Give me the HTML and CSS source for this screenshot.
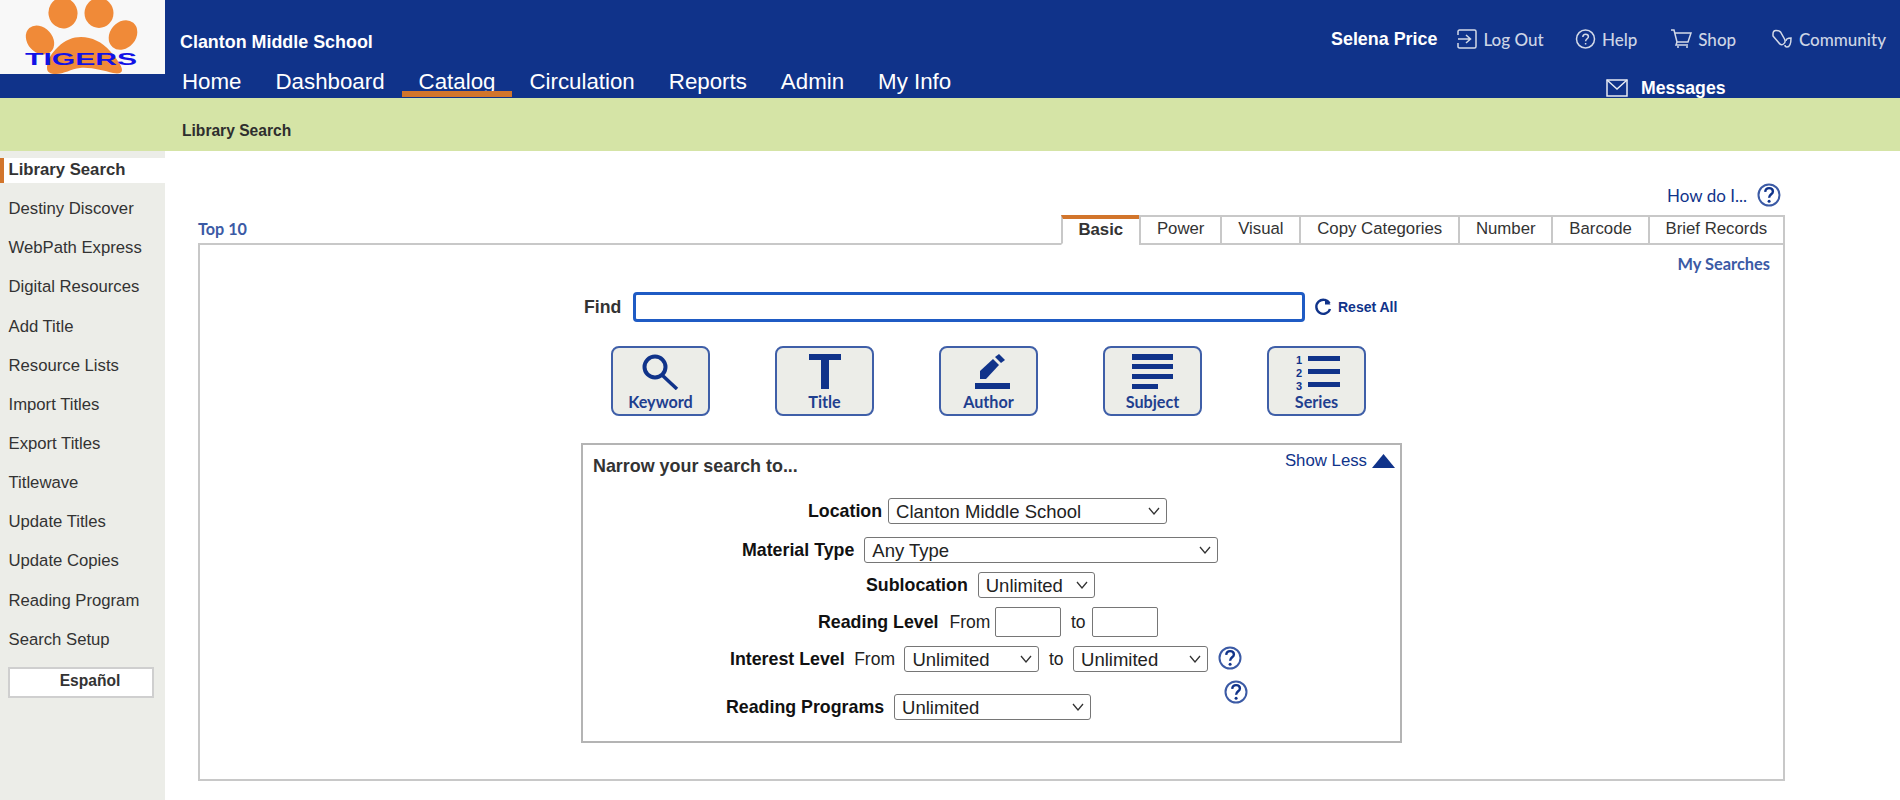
FILE: index.html
```html
<!DOCTYPE html>
<html lang="en">
<head>
<meta charset="utf-8">
<title>Library Search</title>
<link rel="stylesheet" href="styles.css">
</head>
<body>
<svg class="sprite" aria-hidden="true">
  <symbol id="help" viewBox="0 0 24 24">
    <circle cx="12" cy="12" r="10.500" fill="none" stroke="#3b5aa5" stroke-width="2"/>
    <path d="M8.200 8.800c.2-2.400 1.900-3.700 3.900-3.700 2.200 0 3.800 1.400 3.800 3.300 0 2.800-3.700 3-3.800 6.300" fill="none" stroke="#10338a" stroke-width="2.400"/>
    <circle cx="12.100" cy="18.300" r="1.500" fill="#10338a"/>
  </symbol>
</svg>

<header class="header">
  <div class="logo">
    <svg width="165" height="74" viewBox="0 0 165 74">
      <rect width="165" height="74" fill="#f8f8f8"/>
      <g fill="#f08a38">
        <ellipse cx="63" cy="13" rx="14.500" ry="15.500" transform="rotate(-12 63 13)"/>
        <ellipse cx="99" cy="13" rx="14.500" ry="15"/>
        <ellipse cx="40" cy="40" rx="16" ry="12.500" transform="rotate(48 40 40)"/>
        <ellipse cx="123" cy="35" rx="16" ry="13" transform="rotate(-50 123 35)"/>
        <path d="M47 68c0-8 4-14 11-21 7-7 15-10 23-10 11 0 21 5 29 14 7 8 12 15 12 19 0 3-3 4-9 3-9-2-21-6-33-5-9 1-16 6-24 6-6 0-9-2-9-6z"/>
      </g>
      <text class="logo-text" x="25" y="65" textLength="112" lengthAdjust="spacingAndGlyphs">TIGERS</text>
    </svg>
  </div>
  <div class="head-main">
    <div class="school">Clanton Middle School</div>
    <nav class="topnav">
      <a class="topnav-item">Home</a>
      <a class="topnav-item">Dashboard</a>
      <a class="topnav-item is-current">Catalog</a>
      <a class="topnav-item">Circulation</a>
      <a class="topnav-item">Reports</a>
      <a class="topnav-item">Admin</a>
      <a class="topnav-item">My Info</a>
    </nav>
  </div>
  <div class="head-right">
    <div class="userbar">
      <span class="user-name">Selena Price</span>
      <a class="user-link link-first">
        <svg width="20" height="20" viewBox="0 0 20 20" fill="none" stroke="#d3dae8" stroke-width="1.500"><path d="M1 6V2.500C1 1.600 1.600 1 2.500 1h15c.9 0 1.500.6 1.500 1.500v15c0 .9-.6 1.500-1.500 1.500h-15C1.600 19 1 18.400 1 17.500V14"/><path d="M1 10h12M9 6l4.500 4L9 14"/></svg>
        Log Out
      </a>
      <a class="user-link link-help">
        <svg width="21" height="20" viewBox="0 0 21 20" fill="none" stroke="#d3dae8" stroke-width="1.500"><circle cx="10.500" cy="10" r="9"/><path d="M7.800 8c.1-1.800 1.300-2.800 2.800-2.800 1.600 0 2.800 1 2.800 2.500 0 2-2.700 2.200-2.800 4.500"/><path d="M10.600 14v1.500"/></svg>
        Help
      </a>
      <a class="user-link">
        <svg width="22" height="20" viewBox="0 0 22 20" fill="none" stroke="#d3dae8" stroke-width="1.500"><path d="M1 1h3l3 12h11l3-9H5"/><path d="M7 13l-1 3h12"/><path d="M8 17v2M17 17v2"/></svg>
        Shop
      </a>
      <a class="user-link link-community">
        <svg width="22" height="20" viewBox="0 0 22 20" fill="none" stroke="#d3dae8" stroke-width="1.500"><path d="M2 5c0-2 1-3.500 3-3.500 2 0 3.500 0 4.500 1.500l4 7c1 2 .5 4-1 5s-3.500.5-4.500-1L2 7z"/><path d="M15 12c0-2 2-3 5-3 0 4-.5 9-4 9-1.500 0-2-1-2-2"/></svg>
        Community
      </a>
    </div>
    <div class="messages">
      <svg width="22" height="18" viewBox="0 0 22 18" fill="none" stroke="#e6eaf3" stroke-width="1.500"><path d="M1 1h20v16H1z"/><path d="M1 1l10 9 10-9"/></svg>
      <span>Messages</span>
    </div>
  </div>
</header>

<div class="subbar">Library Search</div>

<div class="page">
  <aside class="sidebar">
    <a class="side-item is-active">Library Search</a>
    <a class="side-item">Destiny Discover</a>
    <a class="side-item">WebPath Express</a>
    <a class="side-item">Digital Resources</a>
    <a class="side-item">Add Title</a>
    <a class="side-item">Resource Lists</a>
    <a class="side-item">Import Titles</a>
    <a class="side-item">Export Titles</a>
    <a class="side-item">Titlewave</a>
    <a class="side-item">Update Titles</a>
    <a class="side-item">Update Copies</a>
    <a class="side-item">Reading Program</a>
    <a class="side-item">Search Setup</a>
    <button class="lang-btn" type="button">Español</button>
  </aside>

  <main class="content">
    <div class="howto">
      <a class="howto-link">How do I...</a>
      <svg class="help-icon" viewBox="0 0 24 24"><use href="#help"/></svg>
    </div>
    <div class="tabrow">
      <a class="top10">Top 10</a>
      <div class="tabs">
        <a class="tab is-active">Basic</a>
        <a class="tab">Power</a>
        <a class="tab">Visual</a>
        <a class="tab">Copy Categories</a>
        <a class="tab">Number</a>
        <a class="tab">Barcode</a>
        <a class="tab">Brief Records</a>
      </div>
    </div>
    <section class="panel">
      <div class="mysearch"><a>My Searches</a></div>
      <div class="findrow">
        <label class="find-label" for="find">Find</label>
        <input class="find-input" id="find" type="text">
        <svg class="reset-icon" width="18" height="20" viewBox="0 0 18 20" fill="none" stroke="#10338a" stroke-width="2.400"><path d="M15.500 6.500A7 7 0 1 0 16 12"/><path d="M11 1.500v6h5.500z" fill="#10338a" stroke="none"/></svg>
        <a class="reset-link">Reset All</a>
      </div>
      <div class="search-types">
        <button class="stype" type="button">
          <svg width="48" height="36" viewBox="0 0 48 36" fill="none" stroke="#10338a" stroke-width="4"><circle cx="18" cy="13" r="10.500"/><path d="M25 21l15 14" stroke-width="3.500"/></svg>
          <span>Keyword</span>
        </button>
        <button class="stype" type="button">
          <svg width="48" height="36" viewBox="0 0 48 36" fill="#10338a"><path d="M8 0h32v6H28v29h-8V6H8z"/></svg>
          <span>Title</span>
        </button>
        <button class="stype" type="button">
          <svg width="48" height="36" viewBox="0 0 48 36" fill="#10338a"><path d="M10 29h35v6H10z"/><path d="M15 25v-8L28 5l6 6-13 14z"/><path d="M30 3l4-3 6 6-4 3z"/></svg>
          <span>Author</span>
        </button>
        <button class="stype" type="button">
          <svg width="48" height="36" viewBox="0 0 48 36" fill="#10338a"><path d="M3 0h41v6H3zM3 10h41v5H3zM3 20h41v5H3zM3 30h26v5H3z"/></svg>
          <span>Subject</span>
        </button>
        <button class="stype" type="button">
          <svg width="48" height="36" viewBox="0 0 48 36"><g fill="#10338a"><path d="M15 2h32v5H15zM15 15h32v5H15zM15 28h32v5H15z"/></g><g class="series-num"><text x="3" y="10">1</text><text x="3" y="23">2</text><text x="3" y="36">3</text></g></svg>
          <span>Series</span>
        </button>
      </div>

      <section class="narrow">
        <div class="narrow-head">
          <h2 class="narrow-title">Narrow your search to...</h2>
          <a class="showless">Show Less <svg width="23" height="14" viewBox="0 0 23 14"><path d="M11.500 0L23 14H0z" fill="#10338a"/></svg></a>
        </div>
        <div class="frow frow-location">
          <label class="flabel">Location</label>
          <select class="fselect w-location"><option>Clanton Middle School</option></select>
        </div>
        <div class="frow frow-material">
          <label class="flabel">Material Type</label>
          <select class="fselect w-material"><option>Any Type</option></select>
        </div>
        <div class="frow frow-sub">
          <label class="flabel">Sublocation</label>
          <select class="fselect w-sub"><option>Unlimited</option></select>
        </div>
        <div class="frow frow-reading">
          <label class="flabel">Reading Level</label>
          <span class="ftext from-reading">From</span>
          <input class="fnum" type="text">
          <span class="ftext">to</span>
          <input class="fnum fnum-to" type="text">
        </div>
        <div class="frow frow-interest">
          <label class="flabel">Interest Level</label>
          <span class="ftext">From</span>
          <select class="fselect w-interest"><option>Unlimited</option></select>
          <span class="ftext">to</span>
          <select class="fselect w-interest"><option>Unlimited</option></select>
          <svg class="help-icon help-interest" viewBox="0 0 24 24"><use href="#help"/></svg>
        </div>
        <div class="frow frow-programs">
          <label class="flabel">Reading Programs</label>
          <select class="fselect w-programs"><option>Unlimited</option></select>
          <svg class="help-icon help-programs" viewBox="0 0 24 24"><use href="#help"/></svg>
        </div>
      </section>
    </section>
  </main>
</div>
</body>
</html>
```
FILE: styles.css
```css
* { box-sizing: border-box; }
html, body { margin: 0; padding: 0; height: 800px; overflow: hidden; background: #fff; }
body { font-family: "Liberation Sans", Arial, sans-serif; color: #333; font-size: 16.8px; }
a { display: inline-block; }
.sprite { display: none; }

.header { display: flex; height: 98px; background: #10338a; color: #fff; }
.logo { width: 165px; height: 74px; flex: none; }
.logo svg { display: block; }
.logo-text { font: 700 16px "Liberation Sans", sans-serif; fill: #1212e6; }

.head-main { flex: 1; }
.school { padding: 31px 0 0 15px; height: 66px; font-size: 17.9px; line-height: 22px; font-weight: 700; }
.topnav { display: flex; }
.topnav-item { position: relative; padding: 0 17px; height: 32px; line-height: 32px; font-size: 22.3px; }
.is-current::after { content: ""; position: absolute; left: 0; right: 0; top: 25px; height: 6px; background: #d2752b; }

.head-right { width: 569px; flex: none; padding-top: 28px; }
.userbar { display: flex; align-items: center; height: 22px; }
.user-name { font-size: 17.9px; font-weight: 700; }
.user-link { display: flex; align-items: center; gap: 6px; margin-left: 33px; font-family: Lato, sans-serif; font-size: 17px; font-weight: 500; color: #cdd5e5; }
.link-first { margin-left: 20px; }
.link-help { margin-left: 31.3px; }
.link-community { margin-left: 34.8px; }
.messages { display: flex; align-items: center; gap: 13px; margin: 29px 0 0 275px; height: 18px; font-size: 17.7px; font-weight: 700; }
.messages svg { display: block; }

.subbar { height: 53px; background: #d5e4a6; padding-left: 182px; line-height: 65px; font-size: 15.6px; font-weight: 700; color: #2e2e2e; }

.page { display: flex; height: 649px; }
.sidebar { width: 165px; flex: none; background: #ecede8; padding-top: 7px; }
.side-item { display: block; height: 25px; line-height: 23.4px; margin-bottom: 14.15px; padding-left: 8.5px; font-size: 16.7px; color: #333; }
.side-item.is-active { background: #fff; border-left: 4px solid #d2752b; padding-left: 4.5px; font-weight: 700; }
.lang-btn { display: block; width: 146px; height: 31px; margin: 0 0 0 8px; padding: 0 0 3px 18px; background: #fff; border: 2px solid #cfcfcf; font: 700 15.6px "Liberation Sans", sans-serif; color: #333; }

.content { width: 1620px; padding: 29px 0 0 33px; }
.howto { display: flex; align-items: center; justify-content: flex-end; height: 30px; width: 1583px; }
.howto-link { font-family: Lato, sans-serif; font-size: 17px; color: #10338a; margin-right: 10px; }
.help-icon { width: 24px; height: 24px; display: block; flex: none; }

.tabrow { display: flex; justify-content: space-between; align-items: flex-end; width: 1587px; margin-top: 5px; height: 28px; }
.top10 { font-family: Lato, sans-serif; font-weight: 700; font-size: 16.2px; color: #3b5aa5; padding-bottom: 5px; }
.tabs { display: flex; height: 30px; margin-bottom: -2px; }
.tab { height: 30px; line-height: 24px; padding: 0 15.85px; border: 2px solid #c8c8c8; border-right-width: 0; font-size: 16.8px; color: #333; }
.tab:last-child { border-right-width: 2px; }
.tab.is-active { position: relative; z-index: 1; font-weight: 700; border-top: 4px solid #d2752b; border-bottom-color: #fff; line-height: 22px; }

.panel { width: 1587px; height: 538px; border: 2px solid #c8c8c8; }
.mysearch { display: flex; justify-content: flex-end; height: 36px; line-height: 37px; padding-right: 13px; font-family: Lato, sans-serif; font-weight: 700; font-size: 16.4px; color: #3b5aa5; }

.findrow { display: flex; align-items: center; height: 30px; margin-top: 11px; padding-left: 384px; }
.find-label { width: 49px; font-size: 17.7px; font-weight: 700; }
.find-input { width: 672px; height: 30px; border: 3px solid #1f5bc4; border-radius: 4px; background: #fff; outline: none; }
.reset-icon { margin-left: 9px; }
.reset-link { margin-left: 6px; font-size: 14px; font-weight: 700; color: #10338a; }

.search-types { display: flex; gap: 65px; margin-top: 24px; padding-left: 411px; }
.stype { display: flex; flex-direction: column; align-items: center; width: 99px; height: 70px; padding: 6px 0 0; background: #ecede8; border: 2px solid #3f5fa8; border-radius: 8px; font: 700 16.2px Lato, sans-serif; color: #1f3f8f; }
.stype svg { display: block; flex: none; }
.stype span { margin-top: 1px; line-height: 21px; }
.series-num { font: 700 11px "Liberation Sans", sans-serif; fill: #10338a; }

.narrow { width: 821px; height: 300px; margin: 27px 0 0 381px; border: 2px solid #b4b4b4; }
.narrow-head { display: flex; justify-content: space-between; height: 53px; padding: 6px 5px 0 10px; }
.narrow-title { margin: 3px 0 0; font-size: 17.9px; line-height: 24px; font-weight: 700; color: #333; }
.showless { display: flex; align-items: center; gap: 5px; height: 20px; font-size: 16.8px; color: #10338a; }

.frow { display: flex; align-items: center; height: 26px; }
.flabel { font-size: 17.8px; font-weight: 700; color: #111; }
.ftext { font-size: 17.5px; color: #222; }
.fselect { appearance: none; -webkit-appearance: none; height: 26px; padding: 0 0 0 7px; background: #fff url("data:image/svg+xml,%3Csvg xmlns='http://www.w3.org/2000/svg' width='12' height='8' viewBox='0 0 12 8'%3E%3Cpath d='M1 1l5 6 5-6' fill='none' stroke='%23333' stroke-width='1.300'/%3E%3C/svg%3E") no-repeat right 6px center; border: 1px solid #767676; border-radius: 3px; font: 18.5px "Liberation Sans", sans-serif; color: #222; }
.fnum { width: 66px; height: 30px; background: #fff; border: 1px solid #767676; border-radius: 2px; }

.w-location { width: 279px; }
.w-material { width: 354px; }
.w-sub { width: 117px; }
.w-interest { width: 135px; }
.w-programs { width: 197px; }

.frow-location { padding-left: 225px; gap: 6px; }
.frow-material { padding-left: 159px; gap: 10px; margin-top: 13px; }
.frow-sub { padding-left: 283px; gap: 10px; margin-top: 9px; }
.frow-reading { padding-left: 235px; gap: 10px; margin-top: 9px; height: 30px; }
.from-reading { margin: 0 -5.5px 0 1px; }
.fnum-to { margin-left: -4px; }
.frow-interest { padding-left: 147px; gap: 9.5px; margin-top: 9px; }
.frow-programs { padding-left: 143px; gap: 10px; margin-top: 22px; }
.help-interest { margin: -3px 0 0 0; }
.help-programs { align-self: flex-start; margin: -14px 0 0 123px; }
```
